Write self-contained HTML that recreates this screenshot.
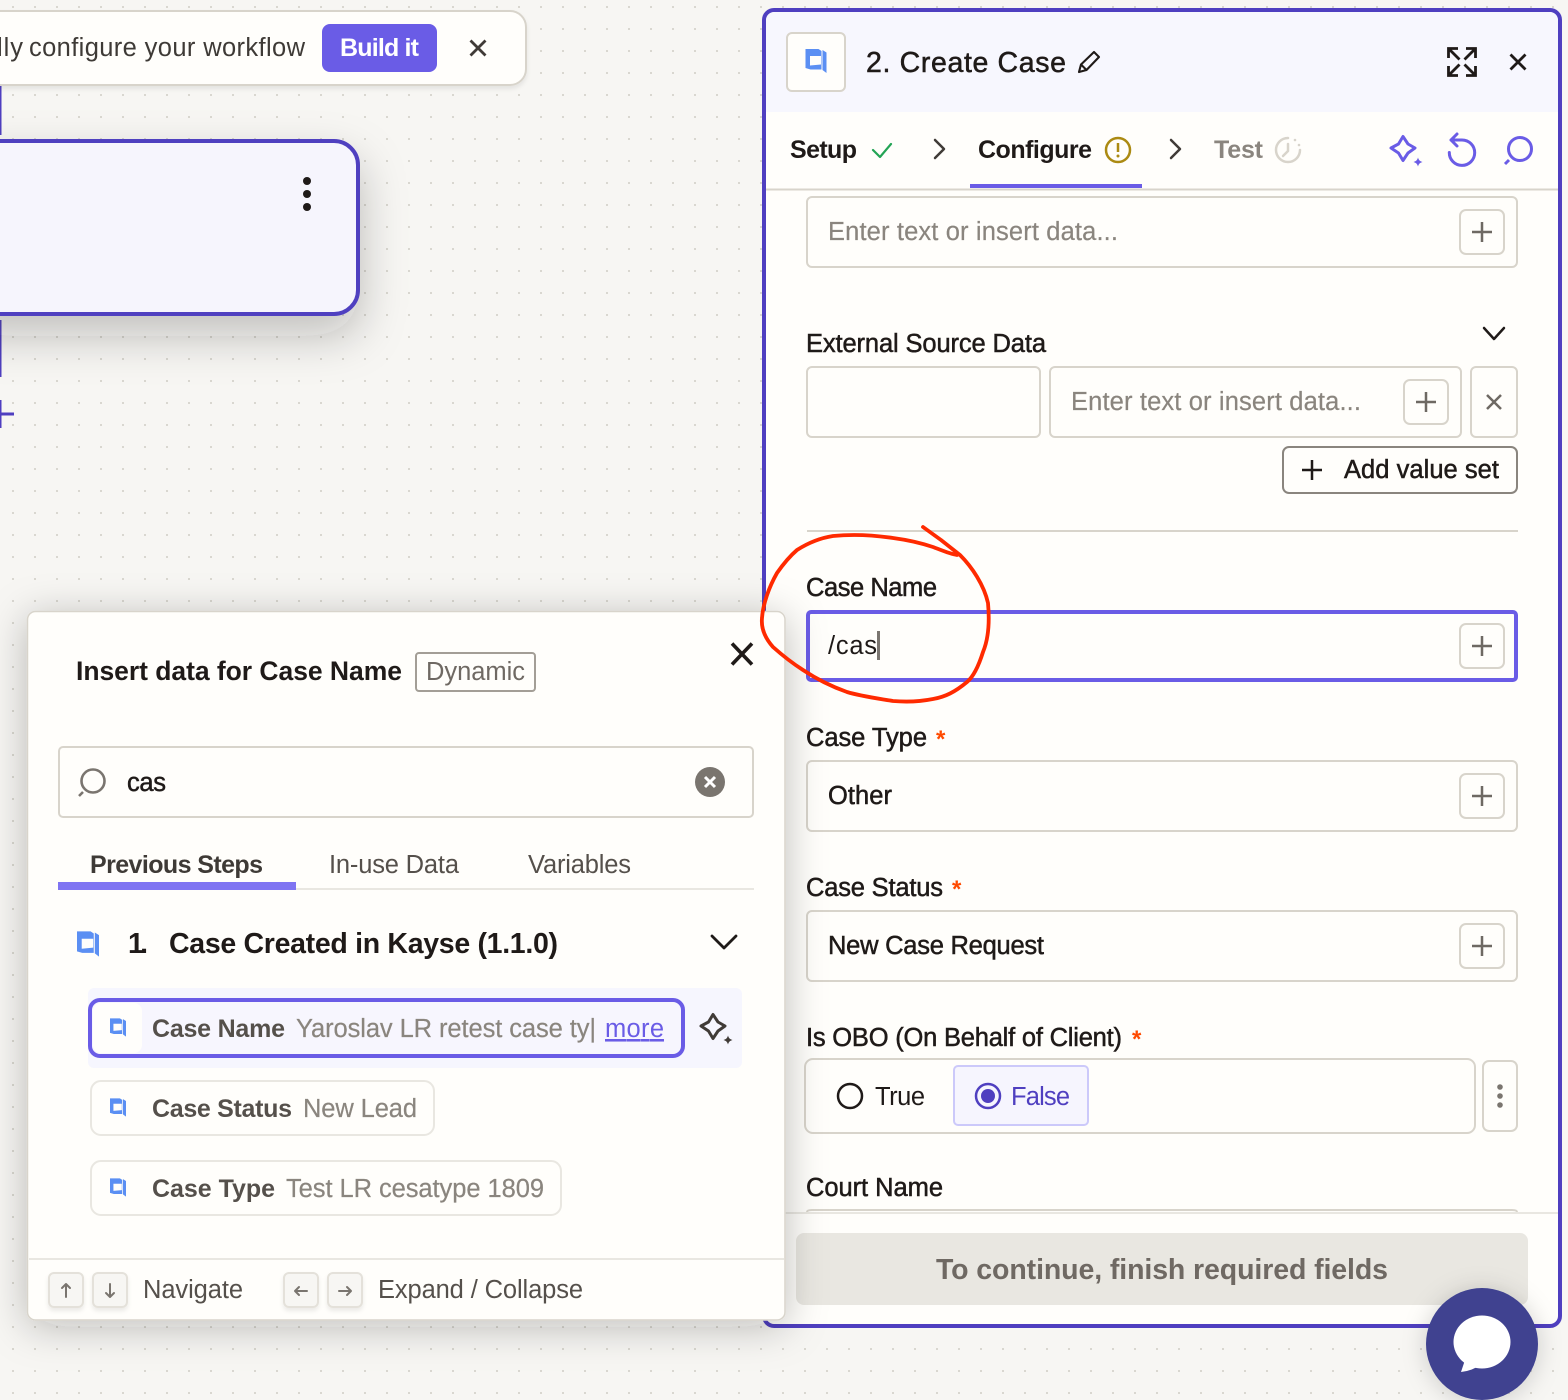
<!DOCTYPE html>
<html><head><meta charset="utf-8"><title>Create Case</title>
<style>
html,body{margin:0;padding:0;background:#f7f6f3;width:1568px;height:1400px;overflow:hidden}
svg{display:block;position:absolute;left:0;top:0}
text{font-family:"Liberation Sans",sans-serif;font-size:25.5px;fill:#1f1a18;white-space:pre}
.m{stroke:#1f1a18;stroke-width:.5px}
.b{font-weight:700;font-size:25px}
.ph{fill:#8a857e;stroke:#8a857e;stroke-width:.2px}
.i{fill:none;stroke-linecap:round;stroke-linejoin:round}
.box{fill:#fffefb;stroke:#d8d4cb;stroke-width:2}
</style></head><body>
<svg width="1568" height="1400" viewBox="0 0 1568 1400" xmlns="http://www.w3.org/2000/svg">
<defs>
<pattern id="dots" width="22" height="22" patternUnits="userSpaceOnUse" x="12" y="6"><rect width="2" height="2" x="0" y="0" fill="#d9d7d0"/></pattern>
<filter id="sh1" x="-40%" y="-50%" width="180%" height="220%"><feDropShadow dx="0" dy="20" stdDeviation="22" flood-color="#1f1a18" flood-opacity=".25"/></filter>
<filter id="sh2" x="-15%" y="-15%" width="130%" height="130%"><feDropShadow dx="0" dy="6" stdDeviation="20" flood-color="#1f1a18" flood-opacity=".26"/></filter>
<filter id="sh3" x="-10%" y="-20%" width="120%" height="150%"><feDropShadow dx="0" dy="3" stdDeviation="2" flood-color="#1f1a18" flood-opacity=".08"/></filter>
<filter id="sh4" x="-30%" y="-30%" width="160%" height="160%"><feDropShadow dx="0" dy="2" stdDeviation="12" flood-color="#1f1a18" flood-opacity=".18"/></filter>
<symbol id="logo" viewBox="0 0 21 24"><path fill="#5b8ff3" fill-rule="evenodd" d="M0 0H13L16 2V20.500H5L0 19ZM4.500 7V16.500L15.500 15.500V7Z"/><path fill="#5b8ff3" d="M17 1L21 3.500V24L17 21Z"/></symbol>
<symbol id="spark" viewBox="0 0 36 36"><path class="i" stroke-width="3" stroke="currentColor" d="M15 3.500L20 11L27 15L20 20L15 27.500L10.500 20L3 15L10.500 11Z"/><path fill="currentColor" d="M30 24.500C30.700 27 31.700 28.200 34.500 29C31.700 29.800 30.700 31 30 33.500C29.300 31 28.300 29.800 25.500 29C28.300 28.200 29.300 27 30 24.500Z"/></symbol>
<symbol id="plus" viewBox="0 0 46 46"><rect x="1" y="1" width="44" height="44" rx="6" fill="#fffefb" stroke="#d8d4cb" stroke-width="2"/><path d="M23 13V33M13 23H33" stroke="#6e6963" stroke-width="2.500" fill="none"/></symbol>
<symbol id="corner" viewBox="0 0 14 14"><path d="M1.500 11V1.500H11M1.500 1.500L12.500 12.500" stroke="#1f1a18" stroke-width="2.800" fill="none"/></symbol>
</defs>

<!-- canvas -->
<rect width="1568" height="1400" fill="#f7f6f3"/>
<rect width="1568" height="1400" fill="url(#dots)"/>

<!-- connectors -->
<path d="M0 86V135M0 320V377M0 414H14M0 400V428" stroke="#4f3fc0" stroke-width="3" fill="none"/>

<!-- node -->
<rect x="-40" y="141" width="398" height="173" rx="24" fill="#f6f5fd" stroke="#4f3fc0" stroke-width="4" filter="url(#sh1)"/>
<circle cx="307" cy="181" r="4" fill="#1f1a18"/><circle cx="307" cy="194" r="4" fill="#1f1a18"/><circle cx="307" cy="207" r="4" fill="#1f1a18"/>

<!-- banner -->
<rect x="-30" y="11" width="556" height="74" rx="16" class="box" filter="url(#sh3)"/>
<text x="-3" y="56" textLength="26" style="fill:#3e3a36">lly</text>
<text x="29" y="56" textLength="276" style="fill:#3e3a36">configure your workflow</text>
<rect x="322" y="24" width="115" height="48" rx="8" fill="#6a5ce6"/>
<text x="340" y="56" textLength="79" class="b" style="fill:#fff">Build it</text>
<path d="M470.500 40.500L485.500 55.500M485.500 40.500L470.500 55.500" stroke="#403b37" stroke-width="2.800" fill="none"/>

<!-- right panel -->
<rect x="764" y="10" width="796" height="1316" rx="10" fill="#fffefb" stroke="#4f3fc0" stroke-width="4"/>
<path d="M766 112V22Q766 12 776 12H1548Q1558 12 1558 22V112Z" fill="#f7f7fe"/>
<rect x="787" y="33" width="58" height="58" rx="5" class="box" />
<use href="#logo" x="805" y="49" width="22" height="24"/>
<text x="866" y="72" textLength="200" style="font-size:28.500px" class="m">2. Create Case</text>
<path class="i" stroke="#1f1a18" stroke-width="2.100" d="M1079 72L1081 64.500L1094 52L1099 57L1086.500 70ZM1081 64.500L1086.500 70"/>
<use href="#corner" x="1447" y="47" width="14" height="14"/>
<use href="#corner" transform="translate(2924 0) scale(-1 1)" x="1447" y="47" width="14" height="14"/>
<use href="#corner" transform="translate(0 124) scale(1 -1)" x="1447" y="47" width="14" height="14"/>
<use href="#corner" transform="translate(2924 124) scale(-1 -1)" x="1447" y="47" width="14" height="14"/>
<path d="M1510.500 54.500L1525.500 69.500M1525.500 54.500L1510.500 69.500" stroke="#1f1a18" stroke-width="2.800" fill="none"/>

<!-- tabs -->
<text x="790" y="158" textLength="67" class="b">Setup</text>
<path class="i" stroke="#23a455" stroke-width="2.200" d="M873 150L880 157L891 144"/>
<path class="i" stroke="#403b37" stroke-width="2.500" d="M935 140L944 149L935 158"/>
<text x="978" y="158" textLength="114" class="b">Configure</text>
<circle cx="1118" cy="150" r="12" fill="none" stroke="#ab8a12" stroke-width="2.500"/>
<path d="M1118 143V152" stroke="#ab8a12" stroke-width="2.500"/><circle cx="1118" cy="156" r="1.500" fill="#ab8a12"/>
<path class="i" stroke="#403b37" stroke-width="2.500" d="M1171 140L1180 149L1171 158"/>
<text x="1214" y="158" textLength="49" class="b" style="fill:#8a857e">Test</text>
<path class="i" stroke="#d8d4cb" stroke-width="2.500" d="M1288 138A12 12 0 1 0 1300 150M1288 144V151L1283 156"/><circle cx="1295" cy="140" r="1.300" fill="#d8d4cb"/><circle cx="1299" cy="145" r="1.300" fill="#d8d4cb"/>
<use href="#spark" x="1388" y="133" width="36" height="36" style="color:#6a5ce6"/>
<path class="i" stroke="#6a5ce6" stroke-width="3" d="M1451 140H1462A12.700 12.700 0 1 1 1449.300 152.500M1457 134L1451 140L1457 146"/>
<circle cx="1520" cy="149" r="11.500" fill="none" stroke="#6a5ce6" stroke-width="3"/>
<path d="M1509 160L1505 164" stroke="#6a5ce6" stroke-width="3" fill="none"/>
<rect x="766" y="188.500" width="792" height="2" fill="#d8d4cb"/>
<rect x="970" y="184" width="172" height="4" fill="#6a5ce6"/>

<!-- fields -->
<rect x="807" y="197" width="710" height="70" rx="5" class="box"/>
<text x="828" y="240" textLength="290" class="ph">Enter text or insert data...</text>
<use href="#plus" x="1459" y="209" width="46" height="46"/>

<text x="806" y="352" textLength="240" class="m">External Source Data</text>
<path class="i" stroke="#1f1a18" stroke-width="2.500" d="M1484 328L1494 339L1504 328"/>
<rect x="807" y="367" width="233" height="70" rx="5" class="box"/>
<rect x="1050" y="367" width="411" height="70" rx="5" class="box"/>
<text x="1071" y="410" textLength="290" class="ph">Enter text or insert data...</text>
<use href="#plus" x="1403" y="379" width="46" height="46"/>
<rect x="1471" y="367" width="46" height="70" rx="5" class="box"/>
<path d="M1487 395L1501 409M1501 395L1487 409" stroke="#6e6963" stroke-width="2.500" fill="none"/>
<rect x="1283" y="447" width="234" height="46" rx="6" fill="#fffefb" stroke="#8a857e" stroke-width="2"/>
<path d="M1312 460V480M1302 470H1322" stroke="#1f1a18" stroke-width="2.500" fill="none"/>
<text x="1344" y="478" textLength="155" class="m">Add value set</text>
<rect x="807" y="530" width="711" height="2" fill="#d8d4cb"/>

<text x="806" y="596" textLength="131" class="m">Case Name</text>
<rect x="808" y="612" width="708" height="68" rx="3" fill="#fffefb" stroke="#6a5ce6" stroke-width="4"/>
<text x="828" y="654" textLength="49">/cas</text>
<rect x="877" y="631" width="3" height="29" fill="#7a756f"/>
<use href="#plus" x="1459" y="623" width="46" height="46"/>

<text x="806" y="746" textLength="121" class="m">Case Type</text>
<text x="936" y="747" style="font-size:24px;fill:#ff4a00;font-weight:700">*</text>
<rect x="807" y="761" width="710" height="70" rx="5" class="box"/>
<text x="828" y="804" textLength="64" class="m">Other</text>
<use href="#plus" x="1459" y="773" width="46" height="46"/>

<text x="806" y="896" textLength="137" class="m">Case Status</text>
<text x="952" y="897" style="font-size:24px;fill:#ff4a00;font-weight:700">*</text>
<rect x="807" y="911" width="710" height="70" rx="5" class="box"/>
<text x="828" y="954" textLength="216" class="m">New Case Request</text>
<use href="#plus" x="1459" y="923" width="46" height="46"/>

<text x="806" y="1046" textLength="316" class="m">Is OBO (On Behalf of Client)</text>
<text x="1132" y="1047" style="font-size:24px;fill:#ff4a00;font-weight:700">*</text>
<rect x="805" y="1059" width="670" height="74" rx="8" class="box"/>
<circle cx="850" cy="1096" r="12" fill="none" stroke="#1f1a18" stroke-width="2.500"/>
<text x="875" y="1105" textLength="50">True</text>
<rect x="954" y="1066" width="134" height="59" rx="4" fill="#f6f5fe" stroke="#ccc9fa" stroke-width="2"/>
<circle cx="988" cy="1096" r="12" fill="#f6f5fe" stroke="#4f3fc0" stroke-width="2.500"/><circle cx="988" cy="1096" r="7" fill="#4f3fc0"/>
<text x="1011" y="1105" textLength="59" style="fill:#4f3fc0">False</text>
<rect x="1483" y="1061" width="34" height="70" rx="6" class="box"/>
<circle cx="1500" cy="1087" r="2.800" fill="#7a756f"/><circle cx="1500" cy="1096" r="2.800" fill="#7a756f"/><circle cx="1500" cy="1105" r="2.800" fill="#7a756f"/>
<text x="806" y="1196" textLength="137" class="m">Court Name</text>
<path d="M807 1212Q807 1210 812 1210H1512Q1517 1210 1517 1212" fill="none" stroke="#d8d4cb" stroke-width="2"/>
<rect x="766" y="1212" width="792" height="2" fill="#e9e7e1"/>
<rect x="796" y="1233" width="732" height="72" rx="8" fill="#e9e7e1"/>
<text x="936" y="1279" textLength="452" class="b" style="font-size:28.500px;fill:#6f6963">To continue, finish required fields</text>

<!-- chat -->
<circle cx="1482" cy="1344" r="56" fill="#3f4390" filter="url(#sh4)"/>
<ellipse cx="1482" cy="1342" rx="28.500" ry="26.500" fill="#fff"/>
<path d="M1465 1360L1461 1372Q1472 1371 1482 1364Z" fill="#fff"/>

<!-- popover -->
<rect x="27.500" y="611.500" width="757.500" height="708.500" rx="8" fill="#fffefb" stroke="#d8d4cb" stroke-width="1.500" filter="url(#sh2)"/>
<text x="76" y="680" textLength="326" class="b" style="font-size:26.500px">Insert data for Case Name</text>
<rect x="416" y="653" width="119" height="38" rx="3" fill="#fffefb" stroke="#a39e96" stroke-width="2"/>
<text x="426" y="680" textLength="99" style="fill:#6f6963">Dynamic</text>
<path d="M732 643.500L752 664.500M752 643.500L732 664.500" stroke="#1f1a18" stroke-width="3.600" fill="none"/>

<rect x="59" y="747" width="694" height="70" rx="4" class="box"/>
<circle cx="93" cy="781" r="11.500" fill="none" stroke="#7a756f" stroke-width="2.600"/>
<path d="M83 792L79 796" stroke="#7a756f" stroke-width="2.600" fill="none"/>
<text x="127" y="791" textLength="39" class="m">cas</text>
<circle cx="710" cy="782" r="15" fill="#7a756f"/>
<path d="M705 777L715 787M715 777L705 787" stroke="#fff" stroke-width="3" fill="none"/>

<rect x="58" y="888" width="696" height="2" fill="#e9e7e1"/>
<rect x="58" y="882" width="238" height="8" fill="#7f74f2"/>
<text x="90" y="873" textLength="173" class="b" style="fill:#3e3a36">Previous Steps</text>
<text x="329" y="873" textLength="130" style="fill:#55504b">In-use Data</text>
<text x="528" y="873" textLength="103" style="fill:#55504b">Variables</text>

<use href="#logo" x="77" y="931" width="22" height="26"/>
<text x="128" y="953" textLength="20" class="b" style="font-size:28.500px">1.</text>
<text x="169" y="953" textLength="389" class="b" style="font-size:28.500px">Case Created in Kayse (1.1.0)</text>
<path class="i" stroke="#1f1a18" stroke-width="2.800" d="M712 936L724 948L736 936"/>

<rect x="88" y="988" width="654" height="80" rx="6" fill="#f6f6fe"/>
<rect x="90" y="1000" width="593" height="56" rx="10" fill="#f7f6fe" stroke="#6a5ce6" stroke-width="4"/>
<rect x="93" y="1003" width="49" height="50" rx="8" fill="#fffefb"/>
<use href="#logo" x="110" y="1018" width="16" height="19"/>
<text x="152" y="1037" textLength="133" class="b" style="fill:#55504b">Case Name</text>
<text x="296" y="1037" textLength="300" class="ph">Yaroslav LR retest case ty|</text>
<text x="605" y="1037" textLength="59" style="fill:#6a5ce6;text-decoration:underline">more</text>
<use href="#spark" x="698" y="1011" width="36" height="36" style="color:#403b37"/>

<rect x="91" y="1081" width="343" height="54" rx="10" fill="#fffefb" stroke="#e9e7e1" stroke-width="2"/>
<use href="#logo" x="110" y="1098" width="16" height="19"/>
<text x="152" y="1117" textLength="140" class="b" style="fill:#55504b">Case Status</text>
<text x="303" y="1117" textLength="114" class="ph">New Lead</text>

<rect x="91" y="1161" width="470" height="54" rx="10" fill="#fffefb" stroke="#e9e7e1" stroke-width="2"/>
<use href="#logo" x="110" y="1178" width="16" height="19"/>
<text x="152" y="1197" textLength="123" class="b" style="fill:#55504b">Case Type</text>
<text x="286" y="1197" textLength="258" class="ph">Test LR cesatype 1809</text>

<rect x="29" y="1258" width="755" height="2" fill="#e9e7e1"/>
<g fill="#f7f6f3" stroke="#e4e1da" stroke-width="2" filter="url(#sh3)"><rect x="49" y="1273" width="34" height="34" rx="5"/><rect x="93" y="1273" width="34" height="34" rx="5"/><rect x="284" y="1273" width="34" height="34" rx="5"/><rect x="328" y="1273" width="34" height="34" rx="5"/></g>
<g class="i" stroke="#7a756f" stroke-width="2" fill="none"><path d="M66 1297V1284M62 1288L66 1284L70 1288"/><path d="M110 1284V1297M106 1293L110 1297L114 1293"/><path d="M307 1291H295M299 1287L295 1291L299 1295"/><path d="M339 1291H351M347 1287L351 1291L347 1295"/></g>
<text x="143" y="1298" textLength="100" style="fill:#55504b">Navigate</text>
<text x="378" y="1298" textLength="205" style="fill:#55504b">Expand / Collapse</text>

<!-- red annotation -->
<path class="i" stroke="#ff2a00" stroke-width="3.800" d="M923 527L941 540L960 555C972 567 984 585 988 603C990 625 988 640 983 652C978 668 973 677 967 682C955 692 945 697 933 699C918 702 905 702 893 701C875 698 860 696 847 692C830 686 815 678 803 670C792 663 782 655 773 647C765 638 761 628 762 618C763 604 769 587 777 573C784 563 790 556 797 550C808 543 820 538 833 536C853 534 873 535 893 538C908 540 921 543 933 547C941 550 950 554 957 555"/>
</svg>
</body></html>
